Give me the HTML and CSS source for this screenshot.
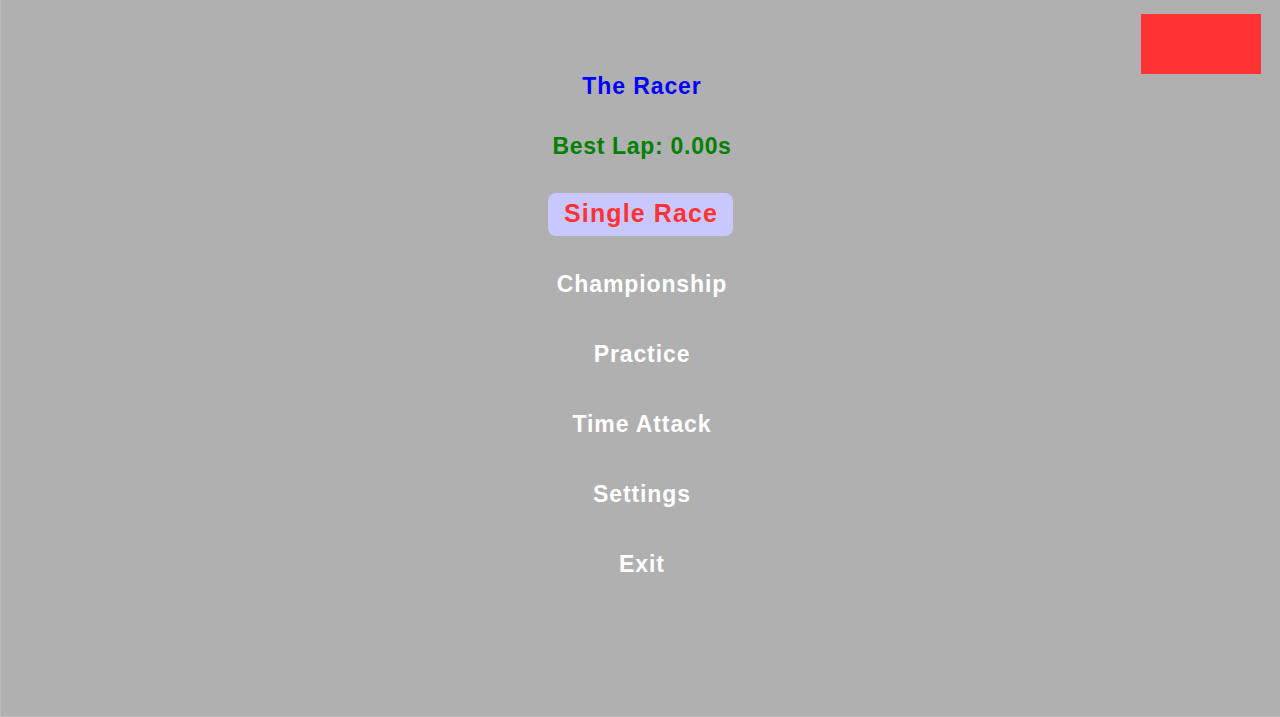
FILE: index.html
```html
<!DOCTYPE html>
<html>
<head>
<meta charset="utf-8">
<title>The Racer</title>
<link rel="stylesheet" href="styles.css">
</head>
<body>
<div class="screen">
  <div class="corner-box"></div>
  <div class="menu">
    <div class="title">The Racer</div>
    <div class="best">Best Lap: 0.00s</div>
    <div class="item selected">Single Race</div>
    <div class="item">Championship</div>
    <div class="item">Practice</div>
    <div class="item">Time Attack</div>
    <div class="item">Settings</div>
    <div class="item">Exit</div>
  </div>
</div>
</body>
</html>
```
FILE: styles.css
```css
html, body {
  margin: 0;
  padding: 0;
  background: #b0b0b0;
}
.screen {
  position: relative;
  width: 1280px;
  height: 717px;
  box-sizing: border-box;
  border-left: 1px solid #bcbcbc;
  border-bottom: 1px solid #bcbcbc;
  background: #b0b0b0;
  font-family: "Liberation Sans", Arial, sans-serif;
  font-weight: bold;
  overflow: hidden;
}
.corner-box {
  position: absolute;
  top: 14px;
  right: 19px;
  width: 120px;
  height: 60px;
  background: #ff3333;
}
.menu {
  display: flex;
  flex-direction: column;
  align-items: center;
  padding-top: 66px;
}
.title, .best, .item {
  height: 40px;
  display: flex;
  align-items: center;
  justify-content: center;
  font-size: 23px;
  letter-spacing: 0.7px;
  padding-left: 3px;
}
.title {
  color: #0000ff;
  letter-spacing: 0.9px;
}
.best {
  color: #008000;
  margin-top: 20px;
}
.item {
  color: #ffffff;
  margin-top: 30px;
  letter-spacing: 0.9px;
}
.item.selected {
  margin-top: 27px;
  height: 43px;
  padding: 0 15px 2px 16px;
  box-sizing: border-box;
  font-size: 25px;
  letter-spacing: 1.1px;
  background: #c8c8ff;
  border-radius: 8px;
  color: #ff3333;
  margin-bottom: -2px;
}
```
